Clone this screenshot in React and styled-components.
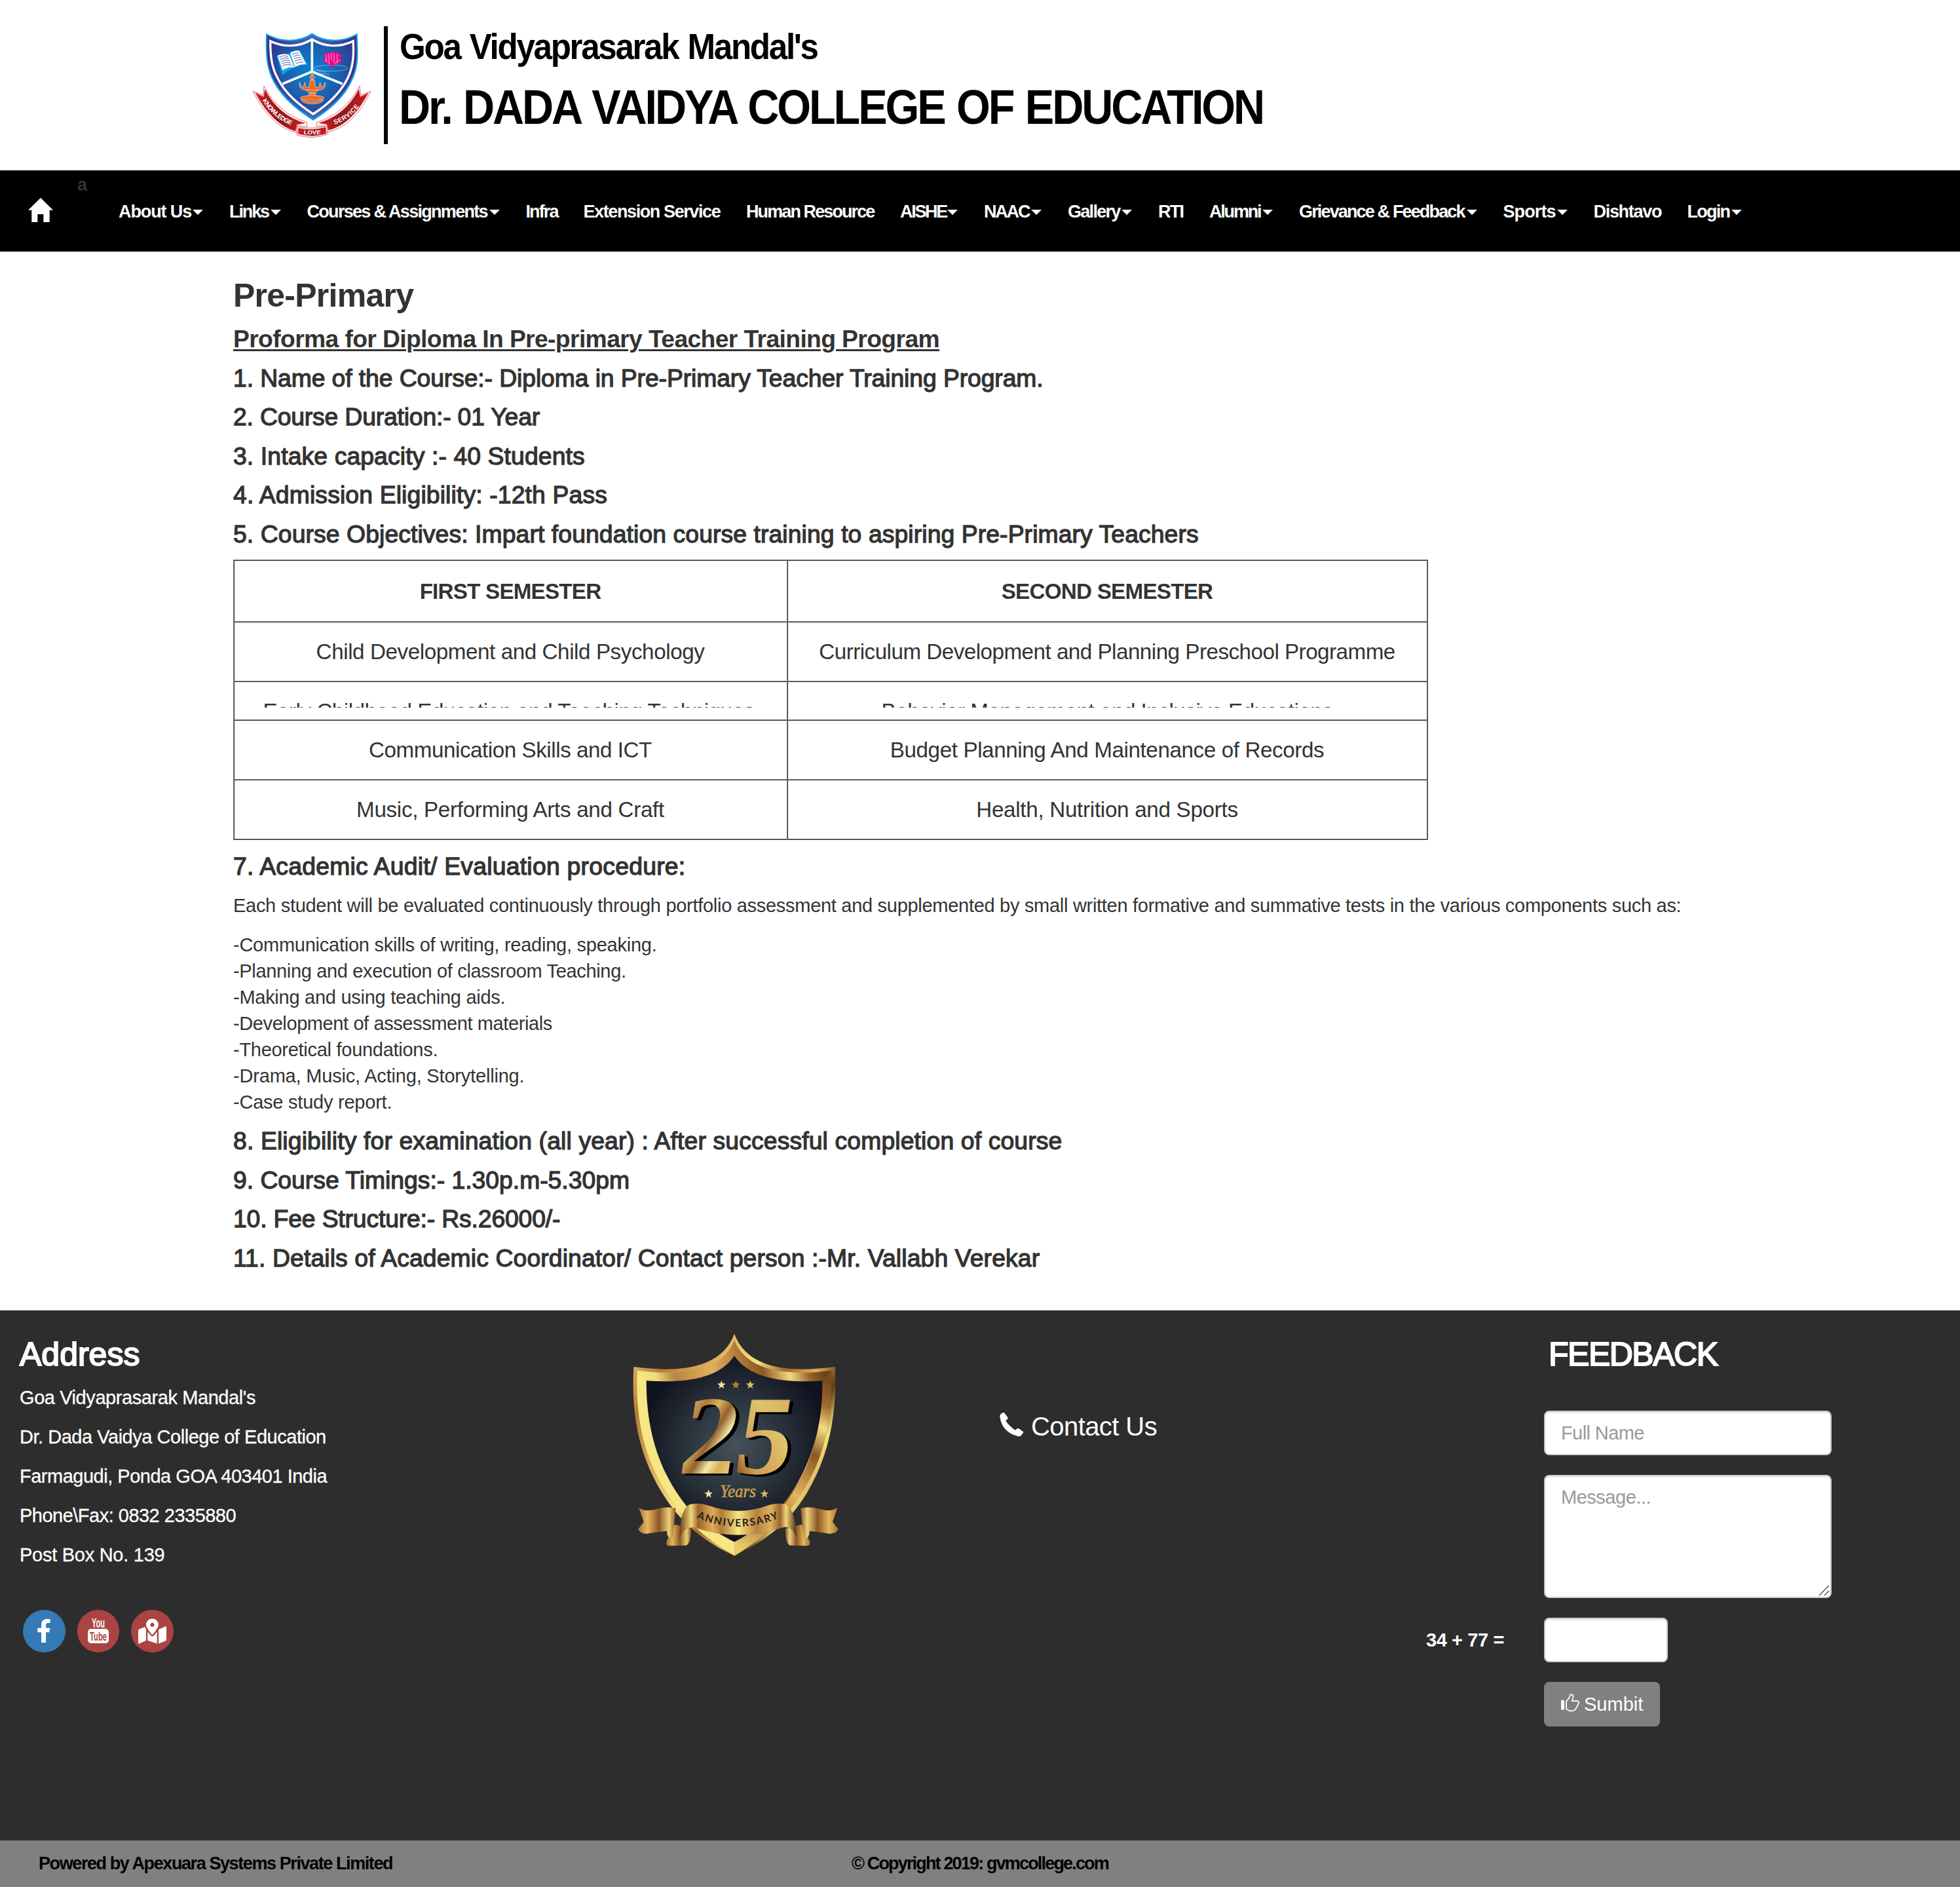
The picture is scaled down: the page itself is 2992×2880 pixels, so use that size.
import React from 'react';
import styled, { createGlobalStyle } from 'styled-components';
import { FaFacebookF, FaMapMarkedAlt } from 'react-icons/fa';

const Global = createGlobalStyle`
  *, *::before, *::after { box-sizing: border-box; }
  body { margin: 0; background: #fff; color: #333; font-family: "Liberation Sans", Arial, sans-serif; font-size: 29px; line-height: 40px; }
  h1, h2, h3, h4, p { margin: 0; font-weight: 400; }
`;

const Page = styled.div`width: 2992px; height: 2880px; overflow: hidden; display: flex; flex-direction: column;`;
const Text = styled.span`white-space: pre; letter-spacing: ${p => p.$ls || 0}px;`;
const Condensed = styled.span`
  display: inline-block; white-space: pre; transform-origin: 0 50%;
  transform: scaleX(${p => p.$scale}); letter-spacing: ${p => p.$ls}px; word-spacing: ${p => -p.$ls}px;
`;

const Header = styled.header`height: 260px; display: flex; padding: 20px 0 0 370px; color: #000;`;
const Logo = styled.svg`width: 216px; height: 220px; display: block; flex: none;`;
const Titles = styled.div`height: 180px; margin-top: 20px; border-left: 6px solid #000; padding-left: 18px;`;
const Society = styled.h2`font-size: 55px; line-height: 60px; font-weight: 700; margin-top: 1px; white-space: nowrap;`;
const College = styled.h1`font-size: 74px; line-height: 80px; margin: 23px 0 0 -1px; font-weight: 700; white-space: nowrap;`;

const Nav = styled.nav`height: 124px; background: #000; color: #fff; display: flex; border-bottom: 2px solid #080808; font-weight: 700;`;
const Home = styled.svg`width: 38px; height: 37px; margin: 42px 37px 0 43px; flex: none;`;
const Stray = styled.span`color: #333; width: 63px; font-size: 27px; line-height: 40px; margin-top: 2px;`;
const Menu = styled.div`display: flex; gap: 40px; font-size: 27px; line-height: 40px; padding-top: 43px;`;
const Item = styled.div`display: flex; align-items: center; height: 40px;`;
const Label = styled.div`width: ${p => p.$w}px; white-space: nowrap;`;
const Caret = styled.i`margin: 2px 0 0 3px; border: 8px solid transparent; border-top-color: #fff; border-bottom: 0;`;

const Main = styled.main`height: 1616px; padding: 41px 0 0 356px; flex: none;`;
const Title = styled.h2`font-size: 50px; line-height: 53px; font-weight: 700; margin-bottom: 20px;`;
const Line = styled.h4`font-size: 37.3px; line-height: 39.6px; margin-bottom: 20px; white-space: nowrap; -webkit-text-stroke: 1.3px #333;`;
const Proforma = styled(Line)`font-weight: 700; -webkit-text-stroke: 0; text-decoration: underline; text-decoration-thickness: 3px; text-underline-offset: 3px;`;
const Para = styled.p`margin-bottom: 20px;`;

const Table = styled.div`
  width: 1824px; margin: -2px 0 21px; display: grid; grid-template-columns: 845px 977px;
  grid-template-rows: 94px 91px 59px 91px 93px; border-right: 2px solid #5a5a5a; font-size: 33.2px;
`;
const Cell = styled.div`
  border-top: 1px solid #808080; border-left: 1px solid #808080;
  box-shadow: inset 1px 1px #333${p => (p.$last ? ', inset 0 -1px #333, inset 0 -2px #808080' : '')};
  text-align: center; padding-top: ${p => (p.$head ? 28 : 26)}px; line-height: 40px; font-weight: ${p => (p.$head ? 700 : 400)};
`;
const Clip = styled.div`height: 14px; overflow: hidden; padding-right: ${p => p.$shift || 0}px;`;

const Footer = styled.footer`height: 809px; background: #2d2d2d; color: #fff; display: grid; grid-template-columns: 930px 596px 651px 815px; flex: none;`;
const Address = styled.div`padding: 41px 0 0 30px;`;
const FootTitle = styled.h3`font-size: 50px; line-height: 53px; -webkit-text-stroke: 2px #fff; white-space: nowrap; margin-bottom: ${p => p.$below || 0}px; padding-left: ${p => p.$indent || 0}px;`;
const AddressLine = styled.p`margin-bottom: 20px; -webkit-text-stroke: .3px #fff;`;
const Social = styled.div`display: flex; gap: 18px; padding: 44px 0 0 5px;`;
const Round = styled.a`width: 64.5px; height: 64.5px; border-radius: 50%; background: ${p => p.$bg}; display: flex; align-items: center; justify-content: center;`;
const YouTubeMark = styled.svg`width: 32px; height: 40px;`;
const Badge = styled.svg`width: 400px; height: 400px; margin-top: 10px; display: block;`;
const Contact = styled.div`display: flex; padding-top: 155px; font-size: 40px; line-height: 44px;`;
const Phone = styled.svg`width: 37px; height: 38px; margin-right: 11px;`;

const Feedback = styled.div`padding-top: 41px;`;
const FormRow = styled.div`display: grid; grid-template-columns: 180px 439px; margin-bottom: 30px; & > :only-child { grid-column: 2; }`;
const Field = styled.div`
  position: relative; width: ${p => p.$w || 439}px; height: ${p => p.$h || 68}px; background: #fff; border: 2px solid #ccc; border-radius: 8px;
  box-shadow: inset 0 2px 2px rgba(0,0,0,.075); padding: 12px 0 0 24px; color: #999;
`;
const Grip = styled.svg`position: absolute; right: 1px; bottom: 1px; width: 17px; height: 17px;`;
const Sum = styled.div`font-weight: 700; padding: 14px 0 0 0;`;
const Submit = styled.div`width: 177px; height: 68px; border-radius: 8px; background: #808080; display: flex; padding: 14px 0 0 26px;`;
const Thumb = styled.svg`width: 28px; height: 28px; margin: 4px 7px 0 0;`;

const Bottom = styled.div`height: 71px; background: #808080; color: #000; font-weight: 700; font-size: 27px; line-height: 40px; padding: 15px 0 0 59px; display: grid; grid-template-columns: 1241px auto;`;

const menu = [
  ['About Us', 110, -1.1, 1], ['Links', 59.5, -2.1, 1], ['Courses & Assignments', 275, -1.7, 1], ['Infra', 48, -1.9],
  ['Extension Service', 208.5, -1.4], ['Human Resource', 195, -1.9], ['AISHE', 69, -2.3, 1], ['NAAC', 69, -2.2, 1],
  ['Gallery', 79, -1.7, 1], ['RTI', 38, -1.7], ['Alumni', 78, -2.2, 1], ['Grievance & Feedback', 252.5, -1.85, 1],
  ['Sports', 79, -0.9, 1], ['Dishtavo', 103, -1.3], ['Login', 64, -1.75, 1],
];

const address = [
  ["Goa Vidyaprasarak Mandal's", -0.42], ['Dr. Dada Vaidya College of Education', -0.47],
  ['Farmagudi, Ponda GOA 403401 India', -0.49], ['Phone\\Fax: 0832 2335880', -0.51], ['Post Box No. 139', -0.27],
];

const components = [
  ['-Communication skills of writing, reading, speaking.', -0.245], ['-Planning and execution of classroom Teaching.', -0.34],
  ['-Making and using teaching aids.', -0.27], ['-Development of assessment materials', -0.4],
  ['-Theoretical foundations.', -0.28], ['-Drama, Music, Acting, Storytelling.', -0.19], ['-Case study report.', -0.23],
];

const Crest = () => (
  <Logo viewBox="0 0 648 660">
    <defs>
      <radialGradient id="blue" gradientUnits="userSpaceOnUse" cx="320" cy="270" r="230">
        <stop offset="0" stopColor="#0a86d0" /><stop offset=".5" stopColor="#1b62b0" /><stop offset="1" stopColor="#32348f" />
      </radialGradient>
      <linearGradient id="rim" x1="0" x2="1"><stop offset="0" stopColor="#3a2f86" /><stop offset=".5" stopColor="#4a63b0" /><stop offset="1" stopColor="#3a2f86" /></linearGradient>
      <linearGradient id="red" x1="0" x2="1"><stop offset="0" stopColor="#d51c24" /><stop offset=".5" stopColor="#8c1a17" /><stop offset="1" stopColor="#d51c24" /></linearGradient>
    </defs>
    <path d="M108 92C175 132 262 132 319 91C376 132 462 132 527 92C530 180 537 245 500 315C463 392 400 445 324 492C250 445 183 392 142 315C105 245 106 180 108 92Z" fill="#05a4e6" />
    <path d="M114 102C180 138 262 138 319 99C376 138 456 138 521 102C524 180 530 245 494 312C457 387 396 438 324 484C254 438 189 387 148 312C111 245 112 180 114 102Z" fill="url(#rim)" />
    <path d="M128 128C190 158 262 156 319 120C376 156 446 158 507 128C512 200 506 250 480 303C444 372 390 420 324 462C260 420 200 372 164 303C134 250 128 200 128 128Z" fill="url(#blue)" stroke="#fff" strokeWidth="10" />
    <path d="M319 120V268M184 324L319 268L458 324" fill="none" stroke="#fff" strokeWidth="11" />
    <path d="M157 196L215 186L222 176L264 170L297 236Q260 236 240 250Q205 262 183 286Z" fill="#09a7e8" />
    <path d="M161 194Q190 180 215 192L238 248Q210 244 184 262ZM219 184Q240 168 260 173L293 234Q265 232 241 247Z" fill="#fff" />
    <path d="M170 202Q190 190 210 200M174 212Q194 200 214 210M178 222Q198 210 218 220M181 232Q201 220 222 230M184 242Q205 230 227 240M229 190Q244 180 258 184M234 200Q248 190 264 194M238 210Q253 200 269 204M242 220Q257 210 274 214M246 231Q262 221 281 225" stroke="#4a4a9d" strokeWidth="4" strokeDasharray="4 2" fill="none" />
    <ellipse cx="405" cy="252" rx="76" ry="14" fill="none" stroke="#8fd0f3" strokeWidth="2" />
    <path d="M330 262L382 270M350 276L400 280M360 290L400 294" stroke="#8fd0f3" strokeWidth="2" />
    <path d="M370 182L384 186L386 179L400 182L412 176L424 182L440 179L442 187L456 188L448 212L458 216L440 232L420 236L410 256L402 236L380 230L370 216L376 210Z" fill="#ec0a8c" />
    <path d="M384 190V222M396 186V228M408 182V216M420 186V228M434 188V224M378 214L400 232M448 214L424 232" stroke="#f9a6d3" strokeWidth="3" />
    <g fill="#f26a21" stroke="#fff" strokeWidth="1.5">
      <circle cx="320" cy="294" r="10" /><path d="M317 272H323V286H317Z" /><path d="M315 304H325V390H315Z" />
      <path d="M262 316Q256 346 284 352H356Q386 346 378 316L370 338H362L356 316L350 340H336L330 308H310L304 340H292L286 316L280 338H270Z" />
      <path d="M290 352H350L334 366H306ZM306 368H334L338 382H302Z" />
      <ellipse cx="320" cy="388" rx="55" ry="11" />
      <path d="M268 396Q320 414 372 396Q362 416 320 416Q278 416 268 396Z" />
    </g>
    <g stroke="#c9252b" strokeWidth="2">
      <path d="M48 358L94 376L99 334Q165 460 296 500V520L254 516L248 548Q130 520 48 358Z" fill="#fff" />
      <path d="M60 366L98 384L103 350Q165 468 286 504L250 510L243 540Q138 510 60 366Z" fill="url(#red)" />
      <path d="M588 358L542 376L537 334Q470 460 340 500V518L384 516L388 546Q510 520 588 358Z" fill="#fff" />
      <path d="M576 366L539 384L533 350Q470 468 352 503L388 509L394 536Q500 510 576 366Z" fill="url(#red)" />
      <path d="M250 520Q320 534 388 516V556Q320 580 250 558Z" fill="#fff" />
      <path d="M256 527Q320 540 382 523V552Q320 572 256 552Z" fill="url(#red)" />
    </g>
    <path id="kn" d="M92 400Q142 486 250 524" fill="none" />
    <path id="se" d="M422 510Q506 482 550 402" fill="none" />
    <g fill="#fff" fontFamily="Liberation Sans" fontWeight="700" fontSize="29">
      <text><textPath href="#kn" textLength="176">KNOWLEDGE</textPath></text>
      <text><textPath href="#se" textLength="142">SERVICE</textPath></text>
      <text x="281" y="556" textLength="78">LOVE</text>
    </g>
  </Logo>
);

const Star = ({ x, y, c }) => <path transform={`translate(${x} ${y})`} fill={c} d="M0-19L5-6L19-5L8 4L12 18L0 10L-12 18L-8 4L-19-5L-5-6Z" />;

const Anniversary = () => (
  <Badge viewBox="0 0 1200 1200">
    <defs>
      <linearGradient id="g1" gradientUnits="userSpaceOnUse" x1="112" y1="200" x2="1035" y2="700">
        <stop offset="0" stopColor="#e2b35b" /><stop offset=".12" stopColor="#b37f38" /><stop offset=".3" stopColor="#dfae5d" /><stop offset=".48" stopColor="#f5e383" /><stop offset=".6" stopColor="#a06a2b" /><stop offset=".72" stopColor="#e0b05a" /><stop offset=".82" stopColor="#5e3a14" /><stop offset=".9" stopColor="#f5e383" /><stop offset="1" stopColor="#b27b36" />
      </linearGradient>
      <linearGradient id="g2" gradientUnits="userSpaceOnUse" x1="150" y1="500" x2="1000" y2="330">
        <stop offset="0" stopColor="#f7e785" /><stop offset=".12" stopColor="#f1dc7b" /><stop offset=".22" stopColor="#b88540" /><stop offset=".42" stopColor="#e0af5e" /><stop offset=".68" stopColor="#8d5723" /><stop offset=".82" stopColor="#f2da80" /><stop offset=".92" stopColor="#9a632a" /><stop offset="1" stopColor="#6c421a" />
      </linearGradient>
      <linearGradient id="g3" gradientUnits="userSpaceOnUse" x1="1000" y1="300" x2="620" y2="1060">
        <stop offset="0" stopColor="#7b4b1e" /><stop offset=".12" stopColor="#a26c2e" /><stop offset=".23" stopColor="#f4e083" /><stop offset=".38" stopColor="#8d5723" /><stop offset=".62" stopColor="#e4b560" /><stop offset=".8" stopColor="#a8742f" /><stop offset="1" stopColor="#e9c96c" />
      </linearGradient>
      <radialGradient id="dark" gradientUnits="userSpaceOnUse" cx="573" cy="590" r="430">
        <stop offset="0" stopColor="#44525a" /><stop offset=".5" stopColor="#2b343d" /><stop offset="1" stopColor="#10131f" />
      </radialGradient>
      <linearGradient id="two" x1="0" y1="0" x2="1" y2="1">
        <stop offset="0" stopColor="#efe3a4" /><stop offset=".28" stopColor="#b27a3b" /><stop offset=".4" stopColor="#d9af5f" /><stop offset=".52" stopColor="#94602a" /><stop offset=".64" stopColor="#f1eaaa" /><stop offset=".74" stopColor="#d9ae55" /><stop offset="1" stopColor="#f0e7a0" />
      </linearGradient>
      <linearGradient id="five" x1=".8" y1="0" x2=".2" y2="1">
        <stop offset="0" stopColor="#cda659" /><stop offset=".4" stopColor="#dfc36d" /><stop offset=".6" stopColor="#d6ac5e" /><stop offset=".76" stopColor="#cf9f52" /><stop offset=".9" stopColor="#8f5b24" />
      </linearGradient>
      <linearGradient id="rib" x1="0" x2="1">
        <stop offset="0" stopColor="#6b3e1e" /><stop offset=".1" stopColor="#f0d77b" /><stop offset=".16" stopColor="#9a642d" /><stop offset=".28" stopColor="#dfab58" /><stop offset=".36" stopColor="#b27a38" /><stop offset=".5" stopColor="#f6e780" /><stop offset=".66" stopColor="#b98140" /><stop offset=".78" stopColor="#e0b25d" /><stop offset=".86" stopColor="#9a642d" /><stop offset=".91" stopColor="#f0d77b" /><stop offset="1" stopColor="#4d2a18" />
      </linearGradient>
      <linearGradient id="tail" x1="0" x2="1">
        <stop offset="0" stopColor="#a26f32" /><stop offset=".25" stopColor="#e6b75e" /><stop offset=".55" stopColor="#8d5625" /><stop offset=".82" stopColor="#ecd079" /><stop offset="1" stopColor="#8d5625" />
      </linearGradient>
    </defs>
    <path d="M112 228C290 252 510 250 573 77C638 250 850 252 1035 228C1042 460 1005 640 903 810C820 945 715 1025 573 1094C430 1025 330 945 245 810C140 640 100 460 112 228Z" fill="url(#g1)" />
    <path d="M129 245C300 268 515 262 573 106C632 262 850 268 1017 245C1023 455 990 635 888 798C806 930 705 1012 573 1090C445 1020 345 930 260 798C155 635 120 455 129 245Z" fill="url(#g2)" />
    <path d="M975 292L1017 245C1023 455 990 635 888 798C806 930 705 1012 573 1094V1030C690 975 780 905 850 790C950 625 975 455 975 292Z" fill="url(#g3)" />
    <path d="M129 245L170 292C170 460 200 630 300 790C368 905 455 970 573 1030V1092C445 1020 345 930 260 798C155 635 120 455 129 245Z" fill="#f6e684" />
    <path d="M170 292C330 302 500 290 573 177C648 290 820 302 976 292C980 460 940 635 850 780C775 900 690 970 573 1030C455 970 368 900 300 790C200 630 170 460 170 292Z" fill="url(#dark)" />
    <Star x={514} y={310} c="#f0e39a" /><Star x={580} y={310} c="#b17d3c" /><Star x={646} y={310} c="#dcb661" />
    <Star x={455} y={809} c="#f0e39a" /><Star x={711} y={809} c="#d9b262" />
    <g fontFamily="Liberation Serif" fontWeight="700" fontSize="515">
      <g fill="#000">
        <text transform="translate(326 727) skewX(-9)">2</text><text transform="translate(577 727) skewX(-9)">5</text>
      </g>
      <text transform="translate(310 716) skewX(-9)" fill="url(#two)">2</text>
      <text transform="translate(561 716) skewX(-9)" fill="url(#five)">5</text>
    </g>
    <text x="508" y="824" textLength="164" lengthAdjust="spacingAndGlyphs" fill="#d0a052" stroke="#d0a052" strokeWidth="1.5" fontFamily="Liberation Serif" fontStyle="italic" fontSize="80">Years</text>
    <g id="side">
      <path d="M300 950L375 970Q372 1046 350 1046L270 1048Q255 1040 266 1020Z" fill="url(#tail)" />
      <path d="M136 874Q165 895 220 878Q270 866 305 876L290 1012Q262 1016 264 980Q210 985 170 993Q140 990 132 972L158 938Z" fill="url(#tail)" />
    </g>
    <use href="#side" transform="translate(1181 0) scale(-1 1)" />
    <path d="M322 1012Q325 860 380 856Q420 850 450 862Q590 914 730 862Q760 850 800 856Q850 860 858 1012Q840 960 800 962Q590 1035 385 962Q340 965 322 1012Z" fill="url(#rib)" />
    <path id="an" d="M400 920Q590 1000 784 918" fill="none" />
    <text fontFamily="Lato" fontWeight="700" fontSize="47" fill="#1f1d1a"><textPath href="#an" textLength="386">ANNIVERSARY</textPath></text>
  </Badge>
);

export default function App() {
  const t = (s, ls) => <Text $ls={ls}>{s}</Text>;
  return (
    <Page>
      <Global />
      <Header>
        <Crest />
        <Titles>
          <Society><Condensed $scale={0.93} $ls={-2.5}>Goa Vidyaprasarak Mandal's</Condensed></Society>
          <College><Condensed $scale={0.9} $ls={-3.43}>Dr. DADA VAIDYA COLLEGE OF EDUCATION</Condensed></College>
        </Titles>
      </Header>
      <Nav>
        <Home viewBox="0 0 114 111"><path fill="#fff" d="M57 0L114 56H98V111H70V75H43V111H16V56H0Z" /></Home>
        <Stray>a</Stray>
        <Menu>{menu.map(([s, w, ls, c]) => <Item key={s}><Label $w={w}>{t(s, ls)}</Label>{c && <Caret />}</Item>)}</Menu>
      </Nav>
      <Main>
        <Title>{t('Pre-Primary', -0.75)}</Title>
        <Proforma>{t('Proforma for Diploma In Pre-primary Teacher Training Program', -0.64)}</Proforma>
        <Line>{t('1. Name of the Course:- Diploma in Pre-Primary Teacher Training Program.', -0.09)}</Line>
        <Line>{t('2. Course Duration:- 01 Year', -0.17)}</Line>
        <Line>{t('3. Intake capacity :- 40 Students', 0.12)}</Line>
        <Line>{t('4. Admission Eligibility: -12th Pass', 0.14)}</Line>
        <Line>{t('5. Course Objectives: Impart foundation course training to aspiring Pre-Primary Teachers', 0.1)}</Line>
        <Table>
          <Cell $head>{t('FIRST SEMESTER', -0.78)}</Cell><Cell $head>{t('SECOND SEMESTER', -0.74)}</Cell>
          <Cell>{t('Child Development and Child Psychology', -0.42)}</Cell><Cell>{t('Curriculum Development and Planning Preschool Programme', -0.51)}</Cell>
          <Cell><Clip $shift={5}>{t('Early Childhood Education and Teaching Techniques', -0.48)}</Clip></Cell><Cell><Clip>{t('Behavior Management and Inclusive Educations', -0.484)}</Clip></Cell>
          <Cell>{t('Communication Skills and ICT', -0.45)}</Cell><Cell>{t('Budget Planning And Maintenance of Records', -0.39)}</Cell>
          <Cell $last>{t('Music, Performing Arts and Craft', -0.3)}</Cell><Cell $last>{t('Health, Nutrition and Sports', -0.29)}</Cell>
        </Table>
        <Line>{t('7. Academic Audit/ Evaluation procedure:', 0.26)}</Line>
        <Para>{t('Each student will be evaluated continuously through portfolio assessment and supplemented by small written formative and summative tests in the various components such as:', -0.29)}</Para>
        <Para>{components.map(([s, ls]) => <React.Fragment key={s}>{t(s, ls)}<br /></React.Fragment>)}</Para>
        <Line>{t('8. Eligibility for examination (all year) : After successful completion of course', 0.14)}</Line>
        <Line>{t('9. Course Timings:- 1.30p.m-5.30pm', -0.01)}</Line>
        <Line>{t('10. Fee Structure:- Rs.26000/-', -0.15)}</Line>
        <Line>{t('11. Details of Academic Coordinator/ Contact person :-Mr. Vallabh Verekar', 0.13)}</Line>
      </Main>
      <Footer>
        <Address>
          <FootTitle $below={19}>{t('Address', 0)}</FootTitle>
          {address.map(([s, ls]) => <AddressLine key={s}>{t(s, ls)}</AddressLine>)}
          <Social>
            <Round $bg="#337ab7"><FaFacebookF size={36} /></Round>
            <Round $bg="#a94442">
              <YouTubeMark viewBox="0 0 32 40" fontFamily="Liberation Sans" fontWeight="700">
                <text x="6" y="15" fontSize="20" textLength="20" lengthAdjust="spacingAndGlyphs" fill="#fff">You</text>
                <rect x="0" y="17" width="32" height="22" rx="5" fill="#fff" />
                <text x="3" y="35" fontSize="18.5" textLength="26" lengthAdjust="spacingAndGlyphs" fill="#a94442">Tube</text>
              </YouTubeMark>
            </Round>
            <Round $bg="#a94442"><FaMapMarkedAlt size={43} /></Round>
          </Social>
        </Address>
        <Anniversary />
        <Contact>
          <Phone viewBox="0 0 112 113"><path fill="#fff" d="M20 1L37 23L38 30L28 40Q46 66 72 83L82 75L90 76L111 92L99 108Q94 113 84 111Q10 92 1 20Q0 14 4 10Q12 0 20 1Z" /></Phone>
          {t('Contact Us', -0.58)}
        </Contact>
        <Feedback>
          <FormRow><FootTitle $indent={7} $below={29}>{t('FEEDBACK', -1.5)}</FootTitle></FormRow>
          <FormRow><Field>{t('Full Name', -0.6)}</Field></FormRow>
          <FormRow><Field $h={188}>{t('Message...', -0.48)}<Grip viewBox="0 0 17 17"><path d="M1 16L16 1M9 16L16 9" stroke="#555" strokeWidth="1.5" /></Grip></Field></FormRow>
          <FormRow><Sum>{t('34 + 77 =', -0.4)}</Sum><Field $w={189} /></FormRow>
          <FormRow>
            <Submit>
              <Thumb viewBox="0 0 63 63"><path fill="#fff" d="M0 22H11V55H0Z" /><path d="M18 26Q28 16 31 6Q33 2 37 3Q43 5 41 12L38 25H56Q63 27 60 34L50 53Q46 59 40 59H30Q26 59 22 54L18 52Z" fill="none" stroke="#fff" strokeWidth="4" /></Thumb>
              {t('Sumbit', 0)}
            </Submit>
          </FormRow>
        </Feedback>
      </Footer>
      <Bottom>
        <div>{t('Powered by Apexuara Systems Private Limited', -1.41)}</div>
        <div>{t('© Copyright 2019: gvmcollege.com', -1.83)}</div>
      </Bottom>
    </Page>
  );
}
